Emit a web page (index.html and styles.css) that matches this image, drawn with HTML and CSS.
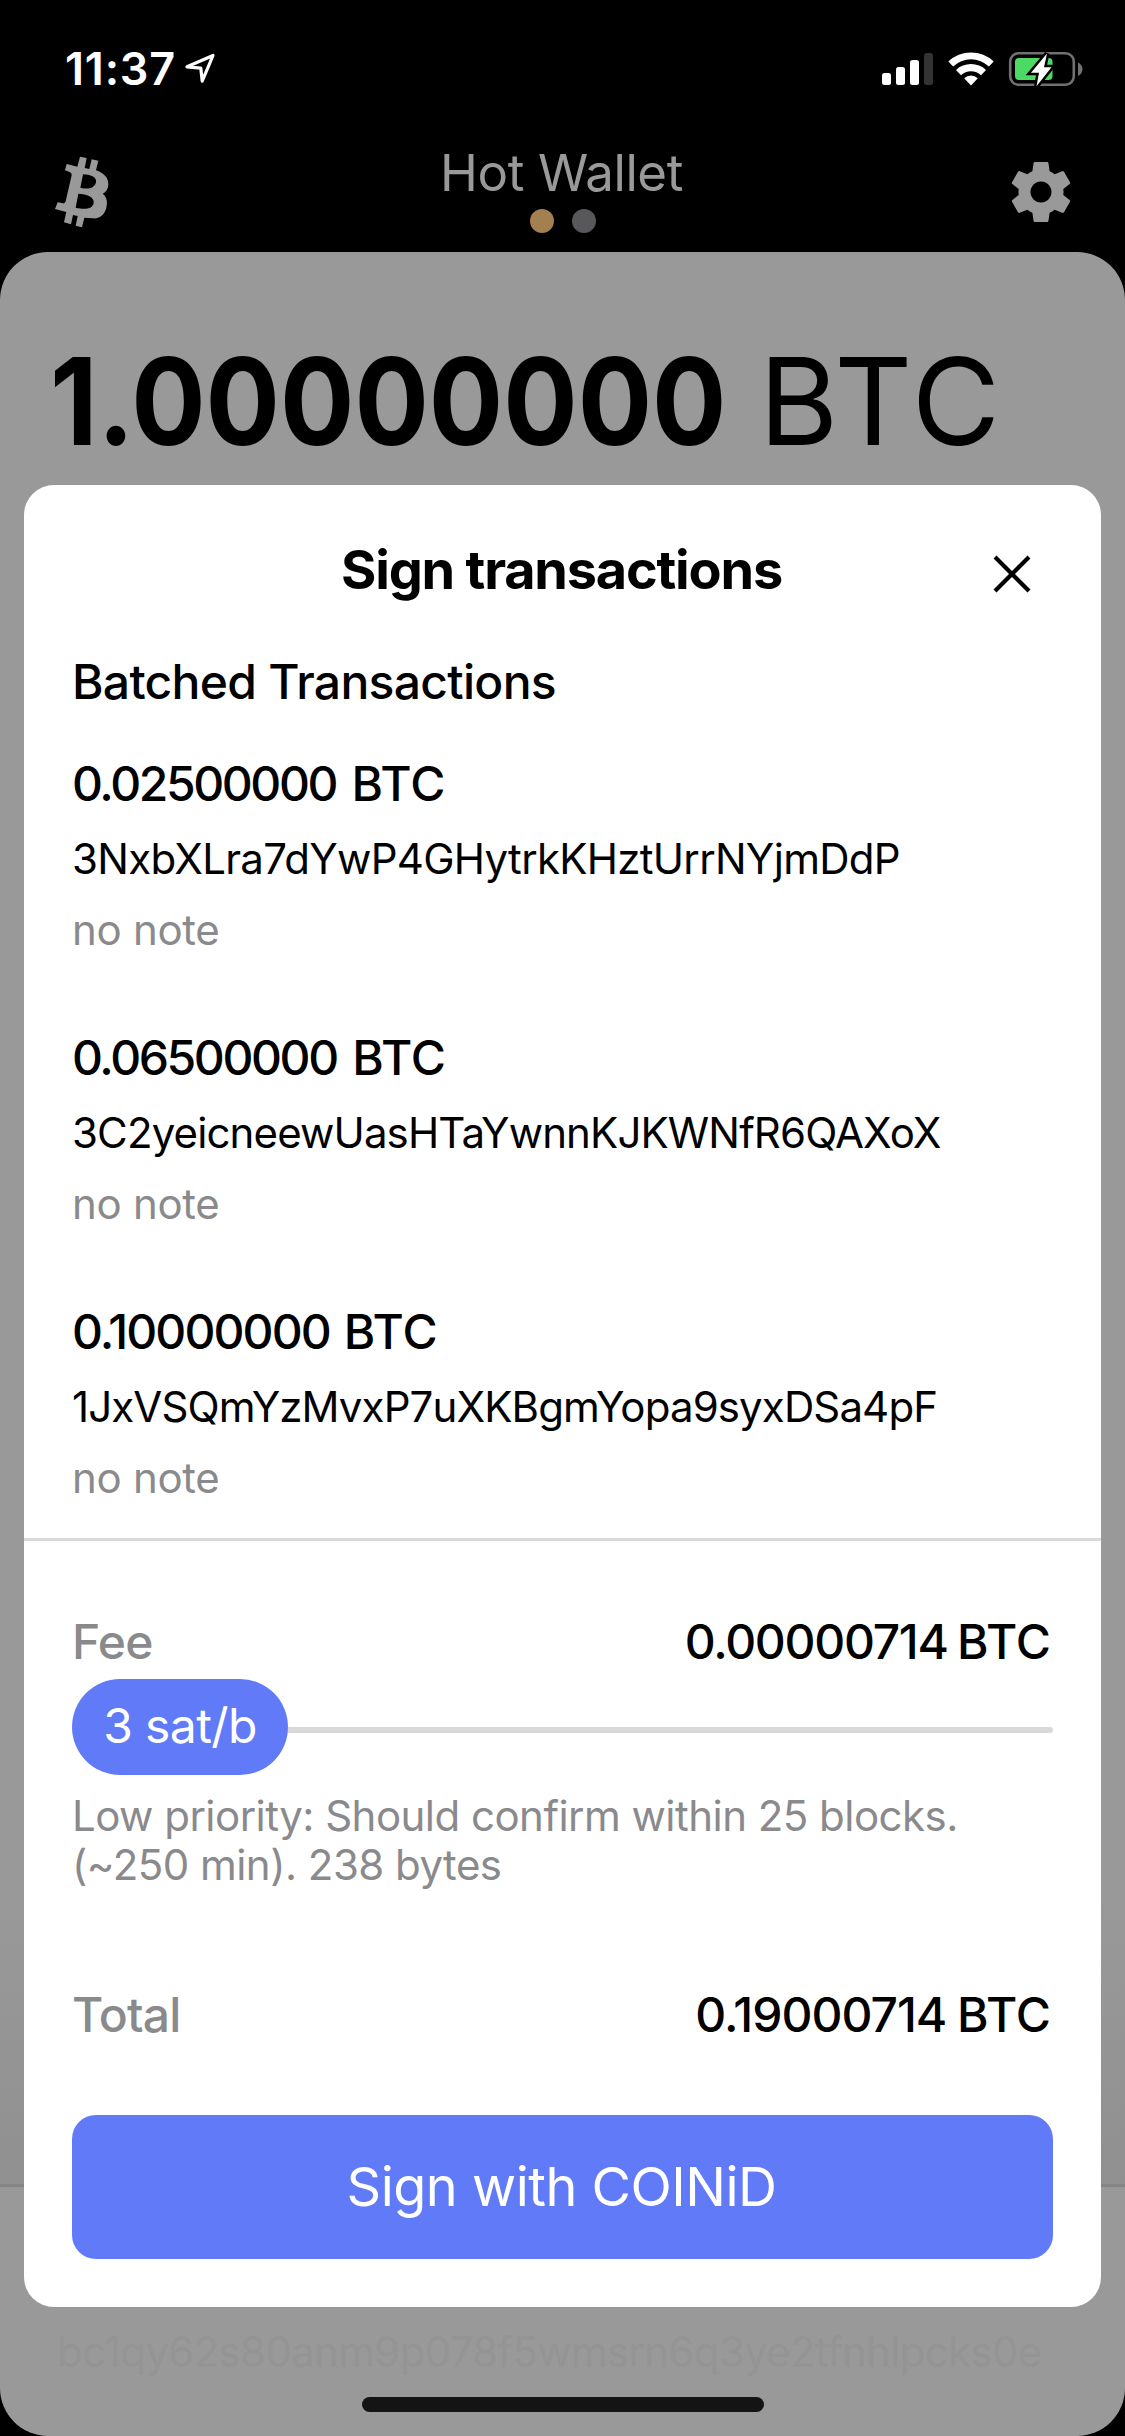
FILE: index.html
```html
<!DOCTYPE html>
<html lang="en">
<head>
<meta charset="utf-8">
<title>Hot Wallet</title>
<link rel="stylesheet" href="styles.css">
</head>
<body>
<div class="screen">
  <div class="status">
    <div class="status-left">
      <span class="time">11:37</span>
      <svg class="location" width="32" height="32" viewBox="0 0 32 32"><path d="M3 14.800 29 3.500 18.200 29.200 16.800 16.200Z" fill="none" stroke="#fff" stroke-width="3.200" stroke-linejoin="round"/></svg>
    </div>
    <svg class="status-icons" width="202" height="38" viewBox="881 50 202 38">
      <g fill="#fff">
        <rect x="882" y="73" width="9" height="12" rx="2.5"/>
        <rect x="896" y="67" width="9" height="18" rx="2.5"/>
        <rect x="910" y="60" width="9" height="25" rx="2.5"/>
        <rect x="924" y="53" width="9" height="32" rx="2.5" fill="#333"/>
        <path d="M948.3 61.5a33 33 0 0 1 45.4 0l-4.800 5a26 26 0 0 0-35.800 0Z"/>
        <path d="M956 70a22 22 0 0 1 30 0l-5 5.200a14.700 14.700 0 0 0-20 0Z"/>
        <path d="M964.200 78.200a10 10 0 0 1 13.600 0L971 85.500Z"/>
      </g>
      <rect x="1010.200" y="53.200" width="63.600" height="31.600" rx="8.500" fill="none" stroke="#717171" stroke-width="2.600"/>
      <path d="M1078 62.500q4.500 2 4.500 6.700t-4.500 6.700Z" fill="#717171"/>
      <rect x="1015" y="58" width="37.500" height="22" rx="4" fill="#4cd964"/>
      <path d="M1047 53.500 1031 72.800h8l-2.500 13.500 15-19h-7.500Z" fill="#fff" stroke="#000" stroke-width="5" paint-order="stroke"/>
    </svg>
  </div>
  <header class="header">
    <svg class="coin" width="56" height="74" viewBox="42 45 168 222"><path fill="#999" fill-rule="evenodd" d="M80 72 112 80 120 50 140 54 134 84 148 87 155 58 175 62 168 91C192 99 206 114 205 134C204 148 197 157 188 161C198 168 203 181 200 197C197 222 180 237 158 235L133 233 126 262 107 257 113 228 99 225 93 253 72 247 79 216 45 207 53 187 70 190Q75 191 77 184L95 106Q96 99 89 96L75 91ZM129 103 121 143C145 150 164 144 168 127C171 110 150 104 129 103ZM115 161 107 203C135 210 158 207 161 189C164 171 140 162 115 161Z"/></svg>
    <div class="wallet">
      <div class="wallet-name">Hot Wallet</div>
      <div class="dots"><i class="dot dot-active"></i><i class="dot"></i></div>
    </div>
    <svg class="gear" width="72" height="72" viewBox="0 0 24 24"><path fill="#999" d="M19.430 12.980c.040-.320.070-.640.070-.980s-.030-.660-.070-.980l2.110-1.650c.190-.150.240-.420.120-.640l-2-3.460c-.120-.220-.390-.300-.610-.220l-2.490 1c-.520-.400-1.080-.730-1.690-.980l-.380-2.650C14.460 2.180 14.250 2 14 2h-4c-.250 0-.460.180-.490.420l-.380 2.650c-.610.250-1.170.590-1.690.980l-2.490-1c-.230-.090-.490 0-.610.220l-2 3.460c-.130.220-.070.490.120.640l2.110 1.650c-.040.320-.070.650-.070.980s.030.660.070.980l-2.110 1.650c-.190.150-.240.420-.120.640l2 3.460c.120.220.390.300.610.220l2.490-1c.520.400 1.080.730 1.690.980l.380 2.650c.030.240.240.420.490.420h4c.250 0 .460-.180.490-.420l.380-2.650c.610-.250 1.170-.590 1.690-.980l2.490 1c.230.090.490 0 .610-.220l2-3.460c.120-.220.070-.490-.120-.640l-2.110-1.650zM12 15.500c-1.930 0-3.500-1.570-3.500-3.500s1.570-3.500 3.500-3.500 3.500 1.570 3.500 3.500-1.570 3.500-3.500 3.500z"/></svg>
  </header>
  <main class="page">
    <div class="balance"><b>1.00000000</b><span>BTC</span></div>
    <div class="fade"></div>
    <div class="address-bar">bc1qy62s80anm9p078f5wmsrn6q3ye2tfnhlpcks0e</div>
  </main>

  <section class="modal">
    <div class="modal-head">
      <h1>Sign transactions</h1>
      <svg class="close" width="38" height="38" viewBox="0 0 38 38"><path d="M2 2 36 36M36 2 2 36" stroke="#000" stroke-width="4.200"/></svg>
    </div>
    <h2>Batched Transactions</h2>
    <div class="tx"><div class="amount">0.02500000 <span class="unit">BTC</span></div><div class="addr addr-tight">3NxbXLra7dYwP4GHytrkKHztUrrNYjmDdP</div><div class="note">no note</div></div>
    <div class="tx"><div class="amount">0.06500000 <span class="unit">BTC</span></div><div class="addr">3C2yeicneewUasHTaYwnnKJKWNfR6QAXoX</div><div class="note">no note</div></div>
    <div class="tx"><div class="amount amount-round">0.10000000 <span class="unit">BTC</span></div><div class="addr">1JxVSQmYzMvxP7uXKBgmYopa9syxDSa4pF</div><div class="note">no note</div></div>
    <div class="summary">
      <div class="row"><span class="label">Fee</span><span class="amount amount-fee">0.00000714 <span class="unit">BTC</span></span></div>
      <div class="slider"><span class="thumb">3 sat/b</span><span class="track"></span></div>
      <p class="hint">Low priority: Should confirm within 25 blocks.<br>(~250 min). 238 bytes</p>
      <div class="row total"><span class="label">Total</span><span class="amount amount-total">0.19000714 <span class="unit">BTC</span></span></div>
      <div class="button">Sign with COINiD</div>
    </div>
  </section>
  <div class="home"></div>
</div>
</body>
</html>
```
FILE: styles.css
```css
* { box-sizing: border-box; margin: 0; }
body { background: #000; font-family: Inter, "Liberation Sans", sans-serif; color: #000; }
.screen { position: relative; width: 1125px; height: 2436px; overflow: hidden; background: #000; display: flex; flex-direction: column; }
svg { display: block; flex: none; }

.status { height: 132px; padding: 50px 42px 0 65px; display: flex; justify-content: space-between; align-items: flex-start; }
.status-left { display: flex; }
.time { width: 119px; color: #fff; font-size: 45px; line-height: 38px; font-weight: 600; letter-spacing: 0.8px; }
.location { margin-top: 2px; }

.header { height: 120px; padding: 24px 51px 0; display: grid; grid-template-columns: 72px 1fr 72px; }
.coin { margin: -1px 0 0 3px; }
.gear { margin-left: 3px; }
.wallet { margin-top: -10px; display: flex; flex-direction: column; align-items: center; }
.wallet-name { color: #999; font-size: 51px; line-height: 53px; margin: 0 2px 10px 0; font-weight: 400; letter-spacing: -0.4px; white-space: nowrap; }
.dots { display: flex; gap: 18px; }
.dot { width: 24px; height: 24px; border-radius: 50%; background: #58585a; }
.dot-active { background: #a47f4f; }

.page { flex: 1; background: #999; border-radius: 48px; display: flex; flex-direction: column; padding-top: 75px; }
.balance { display: flex; font-size: 121px; line-height: 148px; padding-left: 50px; white-space: nowrap; }
.balance b { width: 709px; font-weight: 700; transform: scaleX(0.912); transform-origin: left; }
.balance span { font-weight: 400; letter-spacing: 3px; }
.fade { margin-top: auto; height: 287px; background: linear-gradient(#999, #909090); border-bottom: 3px solid #858585; }
.address-bar { height: 249px; padding: 140px 0 0 57px; font-size: 42px; line-height: 50px; letter-spacing: -0.68px; color: #949494; white-space: nowrap; }

.modal { position: absolute; left: 24px; top: 485px; width: 1077px; height: 1822px; background: #fff; border-radius: 30px; padding: 0 48px; }
.modal-head { height: 168px; padding-top: 52px; display: grid; grid-template-columns: 70px 1fr 70px; }
h1 { grid-column: 2; margin-right: 2px; font-size: 54px; line-height: 66px; font-weight: 650; letter-spacing: -1.2px; text-align: center; white-space: nowrap; }
.close { margin: 18px 0 0 10px; }
h2 { font-size: 48px; line-height: 58px; font-weight: 500; letter-spacing: -0.7px; margin-bottom: 44px; }
.tx { height: 274px; }
.amount, .label { font-size: 48px; line-height: 58px; font-weight: 500; white-space: nowrap; }
.amount { letter-spacing: -2.4px; word-spacing: 5px; }
.amount-round { letter-spacing: -1.9px; word-spacing: 3px; }
.amount-fee { letter-spacing: -1.3px; word-spacing: -2px; }
.amount-total { letter-spacing: -1px; word-spacing: -1px; }
.unit { letter-spacing: 0; }
.row .unit { margin-right: 2px; }
.addr { font-size: 42px; line-height: 50px; letter-spacing: -0.87px; margin-top: 21px; white-space: nowrap; }
.addr-tight { letter-spacing: -0.7px; }
.note { font-size: 42px; line-height: 50px; margin-top: 21px; letter-spacing: -0.3px; color: #8a8a8d; }
.summary { margin: -39px -48px 0; padding: 72px 48px 0; border-top: 3px solid #d9d9d9; }
.row { display: flex; justify-content: space-between; }
.label { color: #8a8a8d; letter-spacing: -0.8px; }
.slider { height: 96px; margin-top: 8px; display: flex; align-items: center; }
.thumb { width: 216px; height: 96px; border-radius: 48px; background: #617bf8; color: #fff; font-size: 48px; line-height: 94px; letter-spacing: -0.6px; text-align: center; }
.track { flex: 1; height: 6px; border-radius: 0 3px 3px 0; background: #d8d8d8; margin-top: 6px; }
.hint { font-size: 42px; line-height: 49px; letter-spacing: -0.53px; color: #8a8a8d; margin-top: 16px; white-space: nowrap; }
.total { margin-top: 97px; }
.button { margin-top: 71px; height: 144px; padding-right: 2px; border-radius: 24px; background: #617bf8; color: #fff; font-size: 54px; line-height: 144px; letter-spacing: -0.5px; text-align: center; }
.home { position: absolute; left: 362px; top: 2397px; width: 402px; height: 15px; border-radius: 8px; background: #141414; }
```
